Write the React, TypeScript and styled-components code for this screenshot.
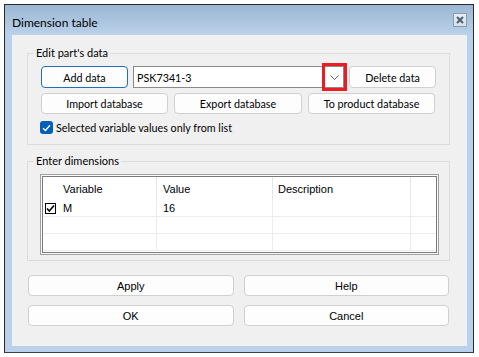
import React from 'react';
import styled, { createGlobalStyle } from 'styled-components';

const GlobalStyle = createGlobalStyle`
	html, body {
		margin: 0;
		padding: 0;
		background: #fff;
	}
	* {
		box-sizing: border-box;
	}
`;

const uiFont = `Lato, 'Noto Sans', sans-serif`;
const legacyFont = `'Liberation Sans', Arial, sans-serif`;
const uiSize = 10.75;

const Page = styled.div`
	padding: 4px 0 0 4px;
`;

const Window = styled.div`
	width: 470px;
	height: 349px;
	display: flex;
	flex-direction: column;
	background: #b9d1ea;
	border: 1px solid #2b2b2b;
	border-bottom-color: #3a3f44;
	box-shadow: 0 1px 0 #3fbdee;
	padding: 0 6px 6px 7px;
`;

const TitleBar = styled.div`
	height: 30px;
	margin: 0 -6px 0 -7px;
	padding: 0 6px 0 7px;
	display: flex;
	justify-content: space-between;
	background: linear-gradient(#9cb7d3, #bad1e9);
`;

const Title = styled.div`
	font-family: ${uiFont};
	font-size: 12px;
	line-height: 16px;
	padding-top: 10px;
	color: #000;
`;

const CloseButton = styled.div`
	width: 14px;
	height: 14px;
	margin-top: 8px;
	border: 1px solid #8d9aa8;
	background: linear-gradient(#e6eef6, #d3e0ee);
	display: flex;
	align-items: center;
	justify-content: center;
`;

const Content = styled.div`
	flex: 1;
	background: #f0f0f0;
	padding: 18px 17px 0 15px;
	display: flex;
	flex-direction: column;
`;

const Group = styled.div<{ $height: number; $top?: number }>`
	position: relative;
	height: ${p => p.$height}px;
	margin-top: ${p => p.$top || 0}px;
	border: 1px solid #dcdcdc;
`;

const GroupLabel = styled.span`
	position: absolute;
	top: -9px;
	left: 6px;
	padding: 0 2px;
	background: #f0f0f0;
	font-family: ${uiFont};
	font-size: 11px;
	line-height: 16px;
	color: #000;
`;

const EditBody = styled.div`
	padding: 12px 0 0 13px;
	display: flex;
	flex-direction: column;
`;

const ButtonRow = styled.div`
	display: flex;
	gap: 5px;
`;

const Button = styled.div<{ $width?: number; $height?: number; $focused?: boolean; $legacy?: boolean }>`
	width: ${p => (p.$width ? `${p.$width}px` : 'auto')};
	height: ${p => p.$height || 21}px;
	display: flex;
	align-items: center;
	justify-content: center;
	background: #fdfdfd;
	border: 1px solid ${p => (p.$focused ? '#1f6fbf' : '#d0d0d0')};
	border-radius: 4px;
	font-family: ${p => (p.$legacy ? legacyFont : uiFont)};
	font-size: ${p => (p.$legacy ? 11 : uiSize)}px;
	color: #000;
	white-space: nowrap;
`;

const Combo = styled.div`
	position: relative;
	width: 211px;
	height: 22px;
	background: #fff;
	border: 1px solid #8a8a8a;
	display: flex;
	align-items: center;
	padding-left: 3px;
	font-family: ${uiFont};
	font-size: ${uiSize}px;
	color: #000;
`;

const Highlight = styled.div`
	position: absolute;
	top: -4px;
	bottom: -4px;
	right: -4px;
	width: 25px;
	border: 3px solid #ec1c24;
	display: flex;
	align-items: center;
	justify-content: center;
`;

const ImportRow = styled.div`
	margin-top: 5px;
	display: grid;
	grid-template-columns: 127px 128px 127px;
	column-gap: 6px;
`;

const CheckRow = styled.div`
	margin: 7px 0 0 -1px;
	display: flex;
	align-items: center;
	gap: 3px;
	font-family: ${uiFont};
	font-size: ${uiSize}px;
	color: #000;
`;

const BlueCheck = styled.div`
	width: 13px;
	height: 13px;
	border-radius: 3px;
	background: #005fb8;
	display: flex;
	align-items: center;
	justify-content: center;
`;

const DimBody = styled.div`
	padding: 12px 10px 0 12px;
`;

const GridFrame = styled.div`
	height: 81px;
	border: 1px solid #a0a0a0;
	padding: 1px;
	background: #fafafa;
`;

const Table = styled.div`
	height: 100%;
	border: 1px solid #7a7a7a;
	background: #fff;
	display: grid;
	grid-template-columns: 114px 116px 138px 1fr;
	grid-template-rows: 23px 17px 17px 17px;
	align-content: start;
`;

const HeadCell = styled.div<{ $pad: number; $last?: boolean }>`
	padding-left: ${p => p.$pad}px;
	border-right: ${p => (p.$last ? 'none' : '1px solid #e5e5e5')};
	display: flex;
	align-items: center;
	font-family: ${legacyFont};
	font-size: 11px;
	color: #000;
`;

const Cell = styled.div<{ $pad?: number; $last?: boolean }>`
	padding-left: ${p => p.$pad || 0}px;
	border-right: ${p => (p.$last ? 'none' : '1px solid #ececec')};
	border-bottom: 1px solid #ececec;
	display: flex;
	align-items: center;
	gap: 7px;
	font-family: ${legacyFont};
	font-size: 11px;
	color: #000;
`;

const RowCheck = styled.div`
	width: 11px;
	height: 11px;
	border: 1px solid #000;
	background: #fff;
	display: flex;
	align-items: center;
	justify-content: center;
`;

const Footer = styled.div`
	margin: 14px 1px 0 1px;
	display: grid;
	grid-template-columns: 1fr 1fr;
	column-gap: 10px;
	row-gap: 9px;
`;

const columns = [
	{ label: 'Variable', pad: 20 },
	{ label: 'Value', pad: 6 },
	{ label: 'Description', pad: 5 },
	{ label: '', pad: 0 }
];

const rows = [
	{ checked: true, variable: 'M', value: '16', description: '' },
	{ checked: false, variable: '', value: '', description: '' },
	{ checked: false, variable: '', value: '', description: '' }
];

const App: React.FC = () => {
	return (
		<Page>
			<GlobalStyle />
			<Window>
				<TitleBar>
					<Title>Dimension table</Title>
					<CloseButton>
						<svg width='8' height='8' viewBox='0 0 8 8'>
							<path d='M1 1L7 7M7 1L1 7' stroke='#4f5d6c' strokeWidth='2' />
						</svg>
					</CloseButton>
				</TitleBar>
				<Content>
					<Group $height={92}>
						<GroupLabel>Edit part's data</GroupLabel>
						<EditBody>
							<ButtonRow>
								<Button $width={87} $height={22} $focused>
									Add data
								</Button>
								<Combo>
									PSK7341-3
									<Highlight>
										<svg width='9' height='5' viewBox='0 0 9 5'>
											<path d='M0.5 0.5L4.5 4.5L8.5 0.5' stroke='#606060' fill='none' />
										</svg>
									</Highlight>
								</Combo>
								<Button $width={87} $height={22}>
									Delete data
								</Button>
							</ButtonRow>
							<ImportRow>
								<Button>Import database</Button>
								<Button>Export database</Button>
								<Button>To product database</Button>
							</ImportRow>
							<CheckRow>
								<BlueCheck>
									<svg width='9' height='8' viewBox='0 0 9 8'>
										<path d='M1 4.2L3.4 6.5L8 1.3' stroke='#fff' strokeWidth='1.3' fill='none' />
									</svg>
								</BlueCheck>
								Selected variable values only from list
							</CheckRow>
						</EditBody>
					</Group>
					<Group $height={100} $top={16}>
						<GroupLabel>Enter dimensions</GroupLabel>
						<DimBody>
							<GridFrame>
								<Table>
									{columns.map((c, i) => (
										<HeadCell key={i} $pad={c.pad} $last={i === columns.length - 1}>
											{c.label}
										</HeadCell>
									))}
									{rows.map((r, i) => (
										<React.Fragment key={i}>
											<Cell $pad={2}>
												{r.checked && (
													<RowCheck>
														<svg width='9' height='9' viewBox='0 0 9 9'>
															<path d='M1 4.5L3.3 7L8 1.5' stroke='#000' strokeWidth='1.6' fill='none' />
														</svg>
													</RowCheck>
												)}
												{r.variable}
											</Cell>
											<Cell $pad={6}>{r.value}</Cell>
											<Cell $pad={5}>{r.description}</Cell>
											<Cell $last />
										</React.Fragment>
									))}
								</Table>
							</GridFrame>
						</DimBody>
					</Group>
					<Footer>
						<Button $legacy>Apply</Button>
						<Button $legacy>Help</Button>
						<Button $legacy>OK</Button>
						<Button $legacy>Cancel</Button>
					</Footer>
				</Content>
			</Window>
		</Page>
	);
};

export default App;
